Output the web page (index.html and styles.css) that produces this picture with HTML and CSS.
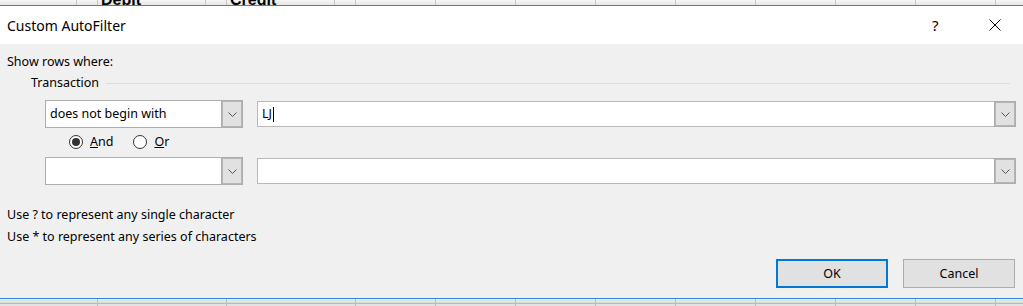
FILE: index.html
```html
<!DOCTYPE html>
<html>

<head>
  <meta charset="UTF-8">
  <title>Custom AutoFilter</title>
  <link rel="stylesheet" href="styles.css">
</head>

<body>
  <!-- sheet header peeking above the dialog -->
  <div class="sheet-row sheet-top">
    <div class="cell col-a"><span class="filter-btn"></span></div>
    <div class="cell col-b"><span class="head-text">Debit</span><span class="filter-btn"></span></div>
    <div class="cell col-c"><span class="head-text">Credit</span><span class="filter-btn"></span></div>
    <div class="cell col-n"></div>
    <div class="cell col-n"></div>
    <div class="cell col-n"></div>
    <div class="cell col-n"></div>
    <div class="cell col-n"></div>
    <div class="cell col-n"></div>
    <div class="cell col-n"></div>
    <div class="cell col-n"></div>
  </div>

  <div class="dialog">
    <div class="title-bar">
      <span class="title">Custom AutoFilter</span>
      <span class="help">?</span>
      <span class="close">
        <svg width="12" height="12" viewBox="0 0 12 12">
          <path d="M0.5 0.5 L11.5 11.5 M11.5 0.5 L0.5 11.5" stroke="#000" stroke-width="1" fill="none" />
        </svg>
      </span>
    </div>

    <div class="dialog-body">
      <div class="label">Show rows where:</div>
      <div class="group-head">
        <span>Transaction</span>
        <span class="rule"></span>
      </div>

      <div class="criteria-row">
        <div class="combo combo-op">
          <span class="combo-text">does not begin with</span>
          <span class="combo-arrow">
            <svg width="9" height="5" viewBox="0 0 9 5">
              <path d="M0.5 0.5 L4.5 4.5 L8.5 0.5" stroke="#555" fill="none" />
            </svg>
          </span>
        </div>
        <div class="combo combo-value">
          <span class="combo-text">LJ<span class="caret"></span></span>
          <span class="combo-arrow">
            <svg width="9" height="5" viewBox="0 0 9 5">
              <path d="M0.5 0.5 L4.5 4.5 L8.5 0.5" stroke="#555" fill="none" />
            </svg>
          </span>
        </div>
      </div>

      <div class="logic-row">
        <label class="radio"><span class="radio-dot checked"></span><span><u>A</u>nd</span></label>
        <label class="radio"><span class="radio-dot"></span><span><u>O</u>r</span></label>
      </div>

      <div class="criteria-row row-second">
        <div class="combo combo-op">
          <span class="combo-text"></span>
          <span class="combo-arrow">
            <svg width="9" height="5" viewBox="0 0 9 5">
              <path d="M0.5 0.5 L4.5 4.5 L8.5 0.5" stroke="#555" fill="none" />
            </svg>
          </span>
        </div>
        <div class="combo combo-value">
          <span class="combo-text"></span>
          <span class="combo-arrow">
            <svg width="9" height="5" viewBox="0 0 9 5">
              <path d="M0.5 0.5 L4.5 4.5 L8.5 0.5" stroke="#555" fill="none" />
            </svg>
          </span>
        </div>
      </div>

      <div class="hints">
        <div>Use ? to represent any single character</div>
        <div>Use * to represent any series of characters</div>
      </div>

      <div class="buttons">
        <button class="btn btn-default">OK</button>
        <button class="btn">Cancel</button>
      </div>
    </div>
  </div>

  <!-- sheet rows below the dialog -->
  <div class="sheet-row sheet-bottom">
    <div class="cell col-a"></div>
    <div class="cell col-b"></div>
    <div class="cell col-c"></div>
    <div class="cell col-n"></div>
    <div class="cell col-n"></div>
    <div class="cell col-n"></div>
    <div class="cell col-n"></div>
    <div class="cell col-n"></div>
    <div class="cell col-n"></div>
    <div class="cell col-n"></div>
    <div class="cell col-n"></div>
  </div>
</body>

</html>
```

FILE: styles.css
```css
body {
  margin: 0;
  width: 1023px;
  height: 306px;
  overflow: hidden;
  font-family: "Noto Sans", sans-serif;
  font-size: 12.5px;
  color: #000;
  background: #f0f0f0;
}

/* spreadsheet strips */
.sheet-row {
  display: flex;
  overflow: hidden;
}

.cell {
  box-sizing: border-box;
  flex: none;
  display: flex;
  justify-content: space-between;
  border-right: 1px solid #c6c6c6;
}

.col-a {
  width: 98px;
}

.col-b {
  width: 129px;
}

.col-c {
  width: 129px;
}

.col-n {
  width: 80px;
}

.sheet-top {
  height: 5px;
  background: linear-gradient(#f6f6f6, #e6e6e6);
}

.sheet-top .col-a {
  justify-content: flex-end;
}

.head-text {
  margin: -8px 0 0 3px;
  font-family: "Liberation Sans", sans-serif;
  font-weight: bold;
  font-size: 16px;
  line-height: 16px;
  color: #000;
}

.filter-btn {
  width: 20px;
  border-left: 1px solid #c6c6c6;
}

.sheet-bottom {
  height: 7px;
  background: linear-gradient(#ececec 0, #dcdcdc 4px, #b8b8b8 4px, #b8b8b8 5px, #e3e3e3 5px);
}

.sheet-bottom .cell {
  border-right-color: #bdbdbd;
}

/* dialog */
.dialog {
  border-top: 1px solid #2b89e0;
  border-bottom: 1px solid #2b89e0;
}

.title-bar {
  display: flex;
  align-items: center;
  height: 38px;
  background: #fff;
}

.title {
  flex: 1;
  padding-left: 7px;
  font-size: 14px;
}

.help {
  width: 12px;
  margin-right: 45px;
  font-size: 15px;
}

.close {
  display: flex;
  margin-right: 22px;
}

.dialog-body {
  display: flex;
  flex-direction: column;
  height: 254px;
  box-sizing: border-box;
  padding: 10px 7px 10px 7px;
  line-height: 16px;
}

.group-head {
  display: flex;
  align-items: center;
  margin: 5px 0 0 24px;
}

.rule {
  flex: 1;
  height: 1px;
  margin: 1px 6px 0 7px;
  background: #dcdcdc;
}

.criteria-row {
  display: flex;
  align-items: center;
  gap: 14px;
  height: 28px;
  margin: 9px 0 0 38px;
}

.row-second {
  margin-top: 7px;
}

.combo {
  box-sizing: border-box;
  display: flex;
  background: #fff;
  border: 1px solid #b9b9b9;
}

.combo-op {
  width: 198px;
  height: 28px;
  border-color: #adadad;
}

.combo-value {
  flex: 1;
  height: 26px;
}

.combo-text {
  flex: 1;
  display: flex;
  align-items: center;
  padding-left: 4px;
}

.caret {
  width: 1px;
  height: 15px;
  margin-left: 1px;
  background: #000;
}

.combo-arrow {
  box-sizing: border-box;
  width: 22px;
  display: flex;
  align-items: center;
  justify-content: center;
  background: #e1e1e1;
  border: 1px solid #adadad;
  margin: -1px -1px -1px 0;
  box-shadow: inset 0 0 0 1px #b5b5b5;
}

.logic-row {
  display: flex;
  gap: 20px;
  margin: 6px 0 0 62px;
}

.radio {
  display: flex;
  align-items: center;
  gap: 7px;
}

.radio-dot {
  box-sizing: border-box;
  width: 14px;
  height: 14px;
  border: 1px solid #333;
  border-radius: 50%;
  background: #fff;
  display: flex;
  align-items: center;
  justify-content: center;
}

.radio-dot.checked::after {
  content: "";
  width: 8px;
  height: 8px;
  border-radius: 50%;
  background: #333;
}

.hints {
  margin-top: 19px;
  line-height: 22px;
}

.buttons {
  display: flex;
  justify-content: flex-end;
  gap: 15px;
  margin-top: 11px;
  padding-right: 1px;
}

.btn {
  box-sizing: border-box;
  width: 112px;
  height: 29px;
  font-family: "Noto Sans", sans-serif;
  font-size: 12.5px;
  color: #000;
  background: #e1e1e1;
  border: 1px solid #adadad;
}

.btn-default {
  border: 2px solid #0078d7;
}
```
